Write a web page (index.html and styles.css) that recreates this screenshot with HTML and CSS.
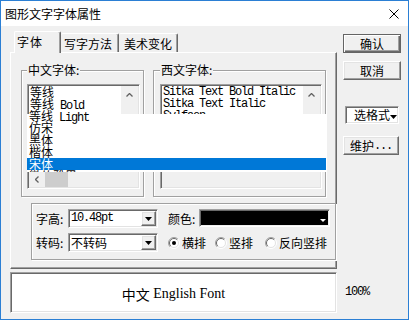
FILE: index.html
```html
<!DOCTYPE html>
<html lang="zh">
<head>
<meta charset="utf-8">
<title>图形文字字体属性</title>
<link rel="stylesheet" href="styles.css">
</head>
<body>
<div class="window">
  <div class="titlebar">
    <span class="title">图形文字字体属性</span>
    <svg class="close" width="10" height="10" viewBox="0 0 10 10"><path d="M0.5 0.5L9.5 9.5M9.5 0.5L0.5 9.5" stroke="#000" stroke-width="1" fill="none"/></svg>
  </div>
  <div class="body">
    <div class="left">
      <div class="tabs">
        <div class="tab active">字体</div>
        <div class="tab t2">写字方法</div>
        <div class="tab t3">美术变化</div>
      </div>
      <div class="panel">
        <div class="groups">
          <fieldset class="group g-cn">
            <legend>中文字体:</legend>
            <div class="listbox lb-cn">
              <div class="items">
                <div class="item">等线</div>
                <div class="item">等线<span class="en"> Bold</span></div>
              </div>
              <div class="vscroll"><div class="sbtn"><svg width="7" height="4" viewBox="0 0 7 4"><path d="M0.5 3.5L3.5 0.5L6.5 3.5" stroke="#606060" stroke-width="1.3" fill="none"/></svg></div></div>
              <div class="hscroll">
                <div class="sbtn h"><svg width="4" height="7" viewBox="0 0 4 7"><path d="M3.5 0.5L0.5 3.5L3.5 6.5" stroke="#606060" stroke-width="1.3" fill="none"/></svg></div>
                <div class="thumb"></div>
              </div>
              <div class="corner"></div>
            </div>
          </fieldset>
          <fieldset class="group g-en">
            <legend>西文字体:</legend>
            <div class="listbox lb-en">
              <div class="items en-list">
                <div class="item">Sitka Text Bold Italic</div>
                <div class="item">Sitka Text Italic</div>
                <div class="item">Sylfaen</div>
              </div>
              <div class="vscroll"><div class="sbtn"><svg width="7" height="4" viewBox="0 0 7 4"><path d="M0.5 3.5L3.5 0.5L6.5 3.5" stroke="#606060" stroke-width="1.3" fill="none"/></svg></div></div>
              <div class="hscroll"></div>
              <div class="corner"></div>
            </div>
          </fieldset>
        </div>

        <div class="droplist">
          <div class="item">等线<span class="en"> Light</span></div>
          <div class="item">仿宋</div>
          <div class="item">黑体</div>
          <div class="item">楷体</div>
          <div class="item sel">宋体</div>
          <div class="item">微软雅黑</div>
        </div>

        <div class="props">
          <div class="row">
            <span class="lbl">字高:</span>
            <div class="combo"><span class="val en">10.48pt</span><span class="dbtn"><svg width="7" height="4" viewBox="0 0 7 4"><path d="M0 0H7L3.5 4Z" fill="#000"/></svg></span></div>
            <span class="lbl lbl2">颜色:</span>
            <div class="colorbox"><div class="swatch"><svg width="6" height="3" viewBox="0 0 6 3"><path d="M0 0H6L3 3Z" fill="#fff"/></svg></div></div>
          </div>
          <div class="row">
            <span class="lbl">转码:</span>
            <div class="combo"><span class="val">不转码</span><span class="dbtn"><svg width="7" height="4" viewBox="0 0 7 4"><path d="M0 0H7L3.5 4Z" fill="#000"/></svg></span></div>
            <label class="radio r1"><svg width="12" height="12" viewBox="0 0 12 12"><circle cx="6" cy="6" r="5" fill="#fff"/><path d="M2.1 9.9A5.5 5.5 0 0 1 9.9 2.1" fill="none" stroke="#a0a0a0"/><path d="M9.9 2.1A5.5 5.5 0 0 1 2.1 9.9" fill="none" stroke="#fff"/><path d="M2.8 9.2A4.5 4.5 0 0 1 9.2 2.8" fill="none" stroke="#696969"/><path d="M9.2 2.8A4.5 4.5 0 0 1 2.8 9.2" fill="none" stroke="#e3e3e3"/><circle cx="6" cy="6" r="2" fill="#000"/></svg>横排</label>
            <label class="radio r2"><svg width="12" height="12" viewBox="0 0 12 12"><circle cx="6" cy="6" r="5" fill="#fff"/><path d="M2.1 9.9A5.5 5.5 0 0 1 9.9 2.1" fill="none" stroke="#a0a0a0"/><path d="M9.9 2.1A5.5 5.5 0 0 1 2.1 9.9" fill="none" stroke="#fff"/><path d="M2.8 9.2A4.5 4.5 0 0 1 9.2 2.8" fill="none" stroke="#696969"/><path d="M9.2 2.8A4.5 4.5 0 0 1 2.8 9.2" fill="none" stroke="#e3e3e3"/></svg>竖排</label>
            <label class="radio r3"><svg width="12" height="12" viewBox="0 0 12 12"><circle cx="6" cy="6" r="5" fill="#fff"/><path d="M2.1 9.9A5.5 5.5 0 0 1 9.9 2.1" fill="none" stroke="#a0a0a0"/><path d="M9.9 2.1A5.5 5.5 0 0 1 2.1 9.9" fill="none" stroke="#fff"/><path d="M2.8 9.2A4.5 4.5 0 0 1 9.2 2.8" fill="none" stroke="#696969"/><path d="M9.2 2.8A4.5 4.5 0 0 1 2.8 9.2" fill="none" stroke="#e3e3e3"/></svg>反向竖排</label>
          </div>
        </div>
      </div>
      <div class="preview"><span class="pv-cn">中文</span><span class="pv-en">&nbsp;English Font</span></div>
    </div>
    <div class="right">
      <div class="btn default b-ok">确认</div>
      <div class="btn b-cancel">取消</div>
      <div class="select"><span>选格式</span><svg width="7" height="4" viewBox="0 0 7 4"><path d="M0 0H7L3.5 4Z" fill="#000"/></svg></div>
      <div class="btn b-maint">维护<span class="en">...</span></div>
      <div class="zoomlbl en">100%</div>
    </div>
  </div>
</div>
</body>
</html>
```

FILE: styles.css
```css
* { box-sizing: border-box; }
html, body { margin: 0; padding: 0; }
body {
  width: 409px;
  height: 320px;
  overflow: hidden;
  font-family: "Noto Sans CJK SC", sans-serif;
  font-size: 12px;
  color: #000;
  background: #f0f0f0;
}
.en {
  font-family: "Liberation Mono", "Noto Sans CJK SC", monospace;
  letter-spacing: -1.2px;
}
.window {
  width: 409px;
  height: 320px;
  border: 1px solid #2b7fd4;
  background: #f0f0f0;
  display: flex;
  flex-direction: column;
}
.titlebar {
  flex: none;
  height: 25px;
  background: #fff;
  display: flex;
  align-items: center;
  justify-content: space-between;
  padding: 0 9px 0 4px;
}
.title { font-size: 12px; line-height: 14px; }
.close { display: block; }

.body { flex: 1; display: flex; padding-left: 9px; }
.left { width: 327px; padding-top: 5px; display: flex; flex-direction: column; }

/* tabs */
.tabs {
  height: 21px;
  display: flex;
  align-items: flex-end;
  padding-left: 4px;
  position: relative;
  z-index: 2;
}
.tab {
  height: 19px;
  padding: 3px 0 0 3px;
  line-height: 14px;
  border-top: 1px solid #fff;
  border-left: 1px solid #fff;
  border-right: 1px solid #696969;
  box-shadow: inset -1px 0 #a0a0a0;
  border-radius: 2px 2px 0 0;
  white-space: nowrap;
}
.tab.active {
  width: 47px;
  height: 22px;
  margin-bottom: -1px;
  background: #f0f0f0;
  padding-left: 2px;
  letter-spacing: 1px;
}
.tab.t2 { width: 58px; border-left: none; padding-left: 3px; }
.tab.t3 { width: 59px; border-left: none; padding-left: 5px; }

/* panel */
.panel {
  position: relative;
  height: 217px;
  border-top: 1px solid #fff;
  border-left: 1px solid #fff;
  border-right: 1px solid #696969;
  border-bottom: 1px solid #696969;
  box-shadow: inset -1px -1px #a0a0a0;
  padding: 11px 0 0 10px;
}
.groups { display: flex; gap: 9px; }
.group {
  margin: 0;
  min-width: 0;
  border: 1px solid #a0a0a0;
  box-shadow: inset 1px 1px #fff, 1px 1px #fff;
}
.g-cn { width: 123px; padding: 8px 3px 7px 5px; }
.g-en { width: 173px; padding: 8px 3px 7px 6px; }
legend {
  padding: 0 1px;
  line-height: 12px;
  font-size: 12px;
  background: #f0f0f0;
}

/* listbox */
.listbox {
  height: 105px;
  border: 1px solid;
  border-color: #a0a0a0 #fff #fff #a0a0a0;
  box-shadow: inset 1px 1px #696969, inset -1px -1px #e3e3e3;
  padding: 1px;
  display: grid;
  grid-template-columns: 1fr 17px;
  grid-template-rows: 1fr 15px;
  background: #f0f0f0;
}
.items { background: #fff; overflow: hidden; }
.item {
  height: 12px;
  line-height: 12px;
  white-space: nowrap;
  padding-left: 1px;
}
.en-list .item {
  font-family: "Liberation Mono", monospace;
  letter-spacing: -1.2px;
}
.vscroll { background: #f0f0f0; }
.sbtn {
  width: 17px;
  height: 17px;
  display: flex;
  align-items: center;
  justify-content: center;
}
.sbtn svg { display: block; }
.hscroll { display: flex; background: #f0f0f0; }
.sbtn.h { width: 16px; height: 15px; }
.thumb { width: 23px; height: 15px; background: #cdcdcd; }
.corner { background: #f0f0f0; }

/* the list drawn over the two list boxes */
.droplist {
  position: absolute;
  left: 16px;
  top: 57px;
  width: 299px;
  height: 62px;
  overflow: hidden;
  background: linear-gradient(to bottom, transparent 4px, #fff 4px);
  padding-left: 1px;
}
.droplist .item { padding-left: 1px; }
.droplist .sel { background: #0078d7; color: #fff; margin-left: -1px; padding-left: 2px; }

/* lower group */
.props {
  margin: 6px 0 0 10px;
  width: 305px;
  height: 57px;
  border: 1px solid #a0a0a0;
  box-shadow: inset 1px 1px #fff, 1px 1px #fff;
  padding: 5px 0 0 4px;
}
.row { display: flex; align-items: center; height: 19px; }
.row + .row { margin-top: 5px; }
.lbl { width: 32px; line-height: 19px; white-space: nowrap; }
.lbl2 { margin-left: 10px; width: 31px; }
.combo {
  width: 90px;
  height: 19px;
  background: #fff;
  border: 1px solid;
  border-color: #a0a0a0 #fff #fff #a0a0a0;
  box-shadow: inset 1px 1px #696969, inset -1px -1px #e3e3e3;
  padding: 1px;
  display: flex;
}
.combo .val { flex: 1; padding-left: 1px; line-height: 15px; white-space: nowrap; }
.dbtn {
  width: 15px;
  height: 15px;
  background: #f0f0f0;
  border: 1px solid;
  border-color: #fff #696969 #696969 #fff;
  box-shadow: inset -1px -1px #a0a0a0, inset 1px 1px #e3e3e3;
  display: flex;
  align-items: center;
  justify-content: center;
}
.dbtn svg { display: block; }
.colorbox {
  align-self: flex-start;
  width: 131px;
  height: 18px;
  border: 1px solid;
  border-color: #a0a0a0 #fff #fff #a0a0a0;
  box-shadow: inset 1px 1px #696969;
  padding: 1px;
}
.swatch {
  height: 100%;
  background: #000;
  display: flex;
  justify-content: flex-end;
  align-items: flex-end;
  padding: 0 2px 3px 0;
}
.swatch svg { display: block; }
.radio { display: flex; align-items: center; line-height: 19px; white-space: nowrap; }
.radio svg { display: block; margin-right: 2px; }
.r1 { margin-left: 10px; }
.r2 { margin-left: 9px; }
.r3 { margin-left: 12px; }

/* preview */
.preview {
  margin-top: 3px;
  height: 41px;
  background: #fff;
  border: 1px solid;
  border-color: #a0a0a0 #fff #fff #a0a0a0;
  box-shadow: inset 1px 1px #696969, inset -1px -1px #e3e3e3;
  display: flex;
  align-items: center;
  justify-content: center;
  font-size: 14px;
  padding-top: 2px;
}
.pv-cn { font-family: "Noto Sans CJK SC", sans-serif; }
.pv-en { font-family: "Liberation Serif", serif; }

/* right column */
.right { margin-left: 6px; width: 58px; display: flex; flex-direction: column; }
.btn {
  height: 19px;
  background: #f0f0f0;
  border: 1px solid;
  border-color: #fff #696969 #696969 #fff;
  box-shadow: inset -1px -1px #a0a0a0, inset 1px 1px #e3e3e3;
  display: flex;
  align-items: center;
  justify-content: center;
  line-height: 14px;
  white-space: nowrap;
}
.btn.default {
  border: 1px solid #646464;
  box-shadow: inset 1px 1px #fff, inset -1px -1px #696969, inset -2px -2px #a0a0a0;
}
.b-ok { margin-top: 8px; width: 58px; }
.b-cancel { margin-top: 8px; width: 58px; }
.select {
  margin: 26px 0 0 2px;
  width: 54px;
  height: 18px;
  background: #fff;
  border: 1px solid;
  border-color: #a0a0a0 #fff #fff #a0a0a0;
  box-shadow: inset 1px 1px #696969, inset -1px -1px #e3e3e3;
  display: flex;
  align-items: center;
  justify-content: flex-end;
  padding-right: 1px;
  line-height: 14px;
}
.select svg { display: block; margin-top: 4px; }
.b-maint { margin-top: 12px; width: 56px; }
.zoomlbl { margin: auto 0 21px 2px; line-height: 12px; font-size: 12px; }
```
